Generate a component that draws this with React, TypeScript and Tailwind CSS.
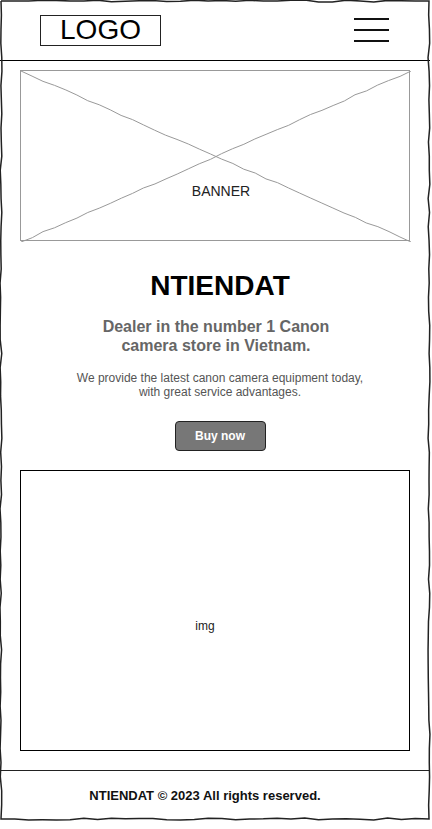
import React from "react";

function rand(seed: number) {
  let s = seed;
  return () => {
    s = (s * 9301 + 49297) % 233280;
    return s / 233280;
  };
}

function wobblyLine(x0: number, y0: number, x1: number, y1: number, amp: number, step: number, r: () => number, start = true) {
  const len = Math.hypot(x1 - x0, y1 - y0);
  const n = Math.max(1, Math.round(len / step));
  const nx = -(y1 - y0) / len;
  const ny = (x1 - x0) / len;
  let d = start ? `M${x0},${y0}` : "";
  for (let i = 1; i <= n; i++) {
    const t = i / n;
    const o = i === n ? 0 : (r() - 0.5) * 2 * amp;
    d += ` L${(x0 + (x1 - x0) * t + nx * o).toFixed(2)},${(y0 + (y1 - y0) * t + ny * o).toFixed(2)}`;
  }
  return d;
}

function Frame() {
  const r = rand(7);
  const d =
    wobblyLine(1, 1, 429, 1, 1, 14, r) +
    wobblyLine(429, 1, 429, 819, 1, 14, r, false) +
    wobblyLine(429, 819, 1, 819, 1, 14, r, false) +
    wobblyLine(1, 819, 1, 1, 1, 14, r, false);
  return (
    <svg className="absolute left-0 top-0 pointer-events-none" width="432" height="829">
      <path d={d} fill="none" stroke="#222" strokeWidth="1.5" />
    </svg>
  );
}

function BannerX() {
  const r = rand(11);
  const a = wobblyLine(0, 0, 390, 171, 0.8, 12, r);
  const b = wobblyLine(0, 171, 390, 0, 0.8, 12, r);
  return (
    <svg className="absolute left-0 top-0" width="390" height="171">
      <path d={a} fill="none" stroke="#999" strokeWidth="1" />
      <path d={b} fill="none" stroke="#999" strokeWidth="1" />
    </svg>
  );
}

export default function App() {
  return (
    <div className="relative w-[432px] h-[829px] bg-white font-['Liberation_Sans',Arial,sans-serif] text-black overflow-hidden">
      <div className="w-[430px] h-[820px] flex flex-col">
        <header className="h-[61px] shrink-0 flex items-center justify-between pl-[40px] pr-[41px] border-b border-black">
          <div className="w-[121px] h-[31px] border border-[#222] flex items-center justify-center">
            <span className="text-[28px] leading-none">LOGO</span>
          </div>
          <div className="flex flex-col gap-[9px] w-[35px]">
            <div className="h-[2px] bg-[#111]" />
            <div className="h-[2px] bg-[#111]" />
            <div className="h-[2px] bg-[#111]" />
          </div>
        </header>

        <main className="flex-1 flex flex-col px-[20px] pt-[9px]">
          <div className="relative h-[171px] border border-[#999] flex justify-center pt-[112px]">
            <BannerX />
            <span className="relative text-[14px] leading-[16px] text-[#222] pl-[12px]">BANNER</span>
          </div>

          <div className="flex flex-col items-center text-center pl-[10px]">
            <h1 className="mt-[30px] text-[28px] leading-[30px] font-bold">NTIENDAT</h1>
            <p className="mt-[16px] w-[250px] text-[16px] leading-[19px] font-bold text-[#666] pr-[8px]">
              Dealer in the number 1 Canon camera store in Vietnam.
            </p>
            <p className="mt-[16px] text-[12px] leading-[14px] text-[#555]">
              We provide the latest canon camera equipment today,
              <br />
              with great service advantages.
            </p>
            <button className="mt-[22px] w-[91px] h-[30px] rounded-[4px] bg-[#777] border border-[#222] text-white text-[12px] font-bold">
              Buy now
            </button>
          </div>

          <div className="mt-[19px] h-[281px] border border-black flex items-center justify-center pr-[20px] pt-[30px]">
            <span className="text-[12px] text-[#222]">img</span>
          </div>
        </main>

        <footer className="h-[50px] shrink-0 border-t border-[#222] flex items-center justify-center pr-[20px]">
          <span className="text-[13px] font-bold text-[#111]">NTIENDAT © 2023 All rights reserved.</span>
        </footer>
      </div>
      <Frame />
    </div>
  );
}
